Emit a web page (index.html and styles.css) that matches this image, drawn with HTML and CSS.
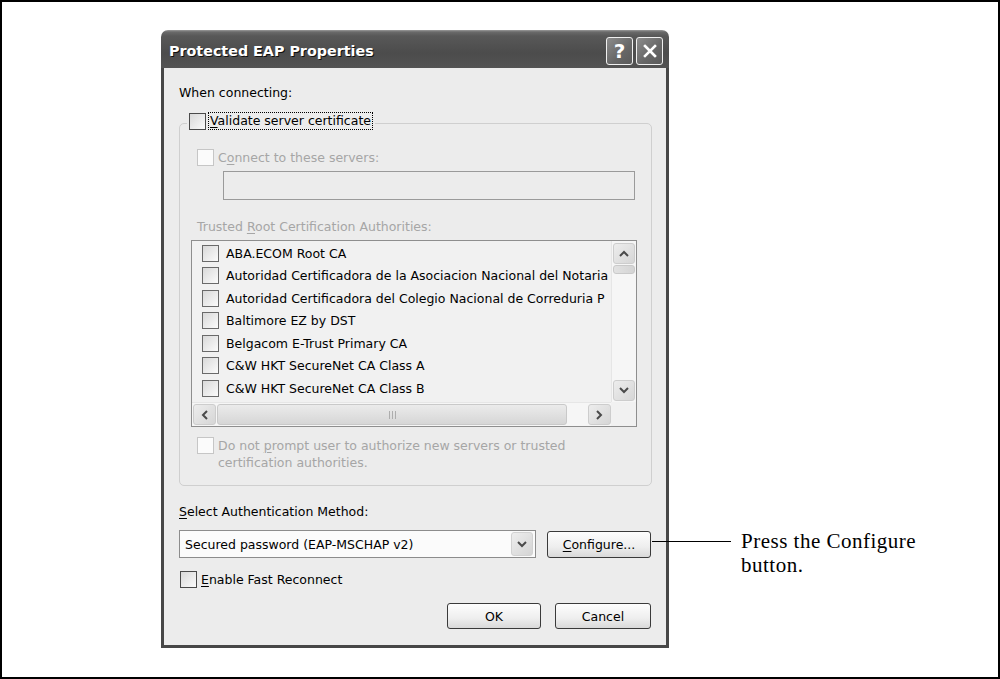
FILE: index.html
```html
<!DOCTYPE html>
<html lang="en">
<head>
  <meta charset="UTF-8">
  <title>Protected EAP Properties</title>
  <link rel="stylesheet" href="styles.css">
</head>
<body>

  <div class="page">
    <div class="dialog">
      <div class="titlebar">
        <span class="title">Protected EAP Properties</span>
        <div class="caption-btns">
          <span class="cap-btn">?</span>
          <span class="cap-btn">
            <svg width="16" height="16" viewBox="0 0 16 16"><path d="M3 3 L13 13 M13 3 L3 13" stroke="#fff" stroke-width="2.6" stroke-linecap="square"/></svg>
          </span>
        </div>
      </div>

      <div class="body">
        <p class="label">When connecting:</p>

        <!-- group box -->
        <div class="group">
          <div class="legend">
            <span class="cb"></span>
            <span class="focus"><u>V</u>alidate server certificate</span>
          </div>

          <div class="row disabled indent connect">
            <span class="cb"></span>C<u>o</u>nnect to these servers:
          </div>
          <div class="textbox"></div>

          <p class="label disabled indent trusted">Trusted <u>R</u>oot Certification Authorities:</p>

          <div class="list">
            <div class="items">
              <div class="item"><span class="cb"></span>ABA.ECOM Root CA</div>
              <div class="item"><span class="cb"></span>Autoridad Certificadora de la Asociacion Nacional del Notaria</div>
              <div class="item"><span class="cb"></span>Autoridad Certificadora del Colegio Nacional de Correduria P</div>
              <div class="item"><span class="cb"></span>Baltimore EZ by DST</div>
              <div class="item"><span class="cb"></span>Belgacom E-Trust Primary CA</div>
              <div class="item"><span class="cb"></span>C&amp;W HKT SecureNet CA Class A</div>
              <div class="item"><span class="cb"></span>C&amp;W HKT SecureNet CA Class B</div>
            </div>
            <div class="vscroll">
              <span class="sbtn">
                <svg width="10" height="7" viewBox="0 0 10 7"><path d="M1 6 L5 2 L9 6" fill="none" stroke="#4a4a4a" stroke-width="2"/></svg>
              </span>
              <span class="vthumb"></span>
              <span class="track"></span>
              <span class="sbtn">
                <svg width="10" height="7" viewBox="0 0 10 7"><path d="M1 1 L5 5 L9 1" fill="none" stroke="#4a4a4a" stroke-width="2"/></svg>
              </span>
            </div>
            <div class="hscroll">
              <span class="sbtn">
                <svg width="7" height="10" viewBox="0 0 7 10"><path d="M6 1 L2 5 L6 9" fill="none" stroke="#4a4a4a" stroke-width="2"/></svg>
              </span>
              <span class="hthumb"></span>
              <span class="track"></span>
              <span class="sbtn">
                <svg width="7" height="10" viewBox="0 0 7 10"><path d="M1 1 L5 5 L1 9" fill="none" stroke="#4a4a4a" stroke-width="2"/></svg>
              </span>
            </div>
            <div class="corner"></div>
          </div>

          <div class="row disabled indent prompt">
            <span class="cb"></span>
            <span>Do not <u>p</u>rompt user to authorize new servers or trusted<br>certification authorities.</span>
          </div>
        </div>

        <p class="label method-label"><u>S</u>elect Authentication Method:</p>
        <div class="method-row">
          <div class="combo">
            <span>Secured password (EAP-MSCHAP v2)</span>
            <span class="drop">
              <svg width="10" height="7" viewBox="0 0 10 7"><path d="M1 1 L5 5 L9 1" fill="none" stroke="#4a4a4a" stroke-width="2"/></svg>
            </span>
          </div>
          <button class="btn configure"><u>C</u>onfigure...</button>
        </div>

        <div class="row fast">
          <span class="cb"></span><u>E</u>nable Fast Reconnect
        </div>

        <div class="actions">
          <button class="btn ok">OK</button>
          <button class="btn cancel">Cancel</button>
        </div>
      </div>
    </div>

    <!-- callout -->
    <div class="note">
      <span class="leader"></span>
      <p>Press the Configure<br>button.</p>
    </div>
  </div>

</body>
</html>
```

FILE: styles.css
```css
* {
  margin: 0;
  padding: 0;
  box-sizing: border-box;
}

body {
  background: #fff;
  font-family: 'DejaVu Sans', sans-serif;
  font-size: 12.5px;
  color: #000;
}

u {
  text-decoration: underline;
  text-underline-offset: 2px;
}

.page {
  width: 1000px;
  height: 679px;
  border: 2px solid #000;
  display: flex;
  align-items: flex-start;
  padding: 28px 0 0 159px;
}

/* dialog window */
.dialog {
  width: 508px;
  flex-shrink: 0;
}

.titlebar {
  height: 38px;
  display: flex;
  justify-content: space-between;
  align-items: center;
  padding: 4px 6px 0 8px;
  border-radius: 7px 7px 0 0;
  background: linear-gradient(#9a9a9a 0, #6a6a6a 2px, #585858 6px, #4c4c4c 60%, #535353 100%);
}

.title {
  color: #fff;
  font-weight: bold;
  font-size: 14.3px;
  text-shadow: 1px 1px 0 #111;
}

.caption-btns {
  display: flex;
  gap: 3px;
}

.cap-btn {
  width: 27px;
  height: 28px;
  display: flex;
  align-items: center;
  justify-content: center;
  border: 1px solid #f0f0f0;
  border-radius: 3px;
  background: linear-gradient(135deg, #8c8c8c, #666 60%, #5a5a5a);
  color: #fff;
  font-weight: bold;
  font-size: 20px;
}

.body {
  background: #ececec;
  border: 3px solid #474747;
  border-top: none;
  padding: 17px 14px 16px 15px;
}

.label {
  line-height: 16px;
}

.disabled {
  color: #a6a6a6;
}

.cb {
  width: 17px;
  height: 17px;
  flex-shrink: 0;
  border: 1px solid #4a4a4a;
  background: linear-gradient(135deg, #d9d9d9, #fbfbfb);
  margin-right: 4px;
}

.disabled .cb {
  border-color: #c6c6c6;
  background: #fbfbfb;
}

.row {
  display: flex;
  align-items: center;
  height: 18px;
}

/* group box */
.group {
  margin-top: 22px;
  border: 1px solid #cfcfcf;
  border-radius: 5px;
  padding: 0 14px 14px 11px;
}

.legend {
  display: flex;
  align-items: center;
  width: fit-content;
  height: 18px;
  margin: -12px 0 0 -4px;
  padding: 0 2px;
  background: #ececec;
}

.legend .cb {
  margin-right: 2px;
}

.focus {
  border: 1px dotted #000;
  padding: 0 1px;
  line-height: 16px;
}

.indent {
  margin-left: 6px;
}

.connect {
  margin-top: 18px;
}

.textbox {
  height: 29px;
  margin: 5px 2px 0 32px;
  border: 1px solid #9a9a9a;
  background: #ececec;
}

.trusted {
  margin-top: 19px;
}

/* certificate list */
.list {
  margin-top: 5px;
  height: 187px;
  border: 1px solid #8e8e8e;
  background: #f1f1f1;
  display: grid;
  grid-template-columns: 1fr 25px;
  grid-template-rows: 1fr 24px;
}

.items {
  overflow: hidden;
  padding-top: 1px;
}

.item {
  display: flex;
  align-items: center;
  height: 22.5px;
  padding-left: 10px;
  white-space: nowrap;
}

.item .cb {
  border-color: #6a6a6a;
  margin-right: 7px;
}

.vscroll {
  display: flex;
  flex-direction: column;
  background: #f6f6f6;
  padding: 1px;
  border-left: 1px solid #e6e6e6;
}

.hscroll {
  display: flex;
  align-items: stretch;
  background: #f6f6f6;
  padding: 1px 0 1px 1px;
  border-top: 1px solid #e6e6e6;
}

.sbtn {
  display: flex;
  align-items: center;
  justify-content: center;
  border: 1px solid #cdcdcd;
  border-radius: 3px;
  background: linear-gradient(135deg, #ededed, #d6d6d6);
}

.vscroll .sbtn {
  height: 21px;
}

.vscroll .sbtn:first-child {
  margin-top: 1px;
}

.hscroll .sbtn {
  width: 23px;
}

.vthumb {
  height: 9px;
  margin-top: 1px;
  border: 1px solid #c9c9c9;
  border-radius: 3px;
  background: linear-gradient(90deg, #e2e2e2, #d4d4d4);
}

.hthumb {
  width: 350px;
  margin-left: 1px;
  border: 1px solid #c9c9c9;
  border-radius: 3px;
  background: linear-gradient(#ebebeb, #d6d6d6);
  display: flex;
  align-items: center;
  justify-content: center;
}

.hthumb::after {
  content: "";
  width: 7px;
  height: 8px;
  background: repeating-linear-gradient(90deg, #adadad 0 1px, transparent 1px 3px);
}

.track {
  flex: 1;
}

.corner {
  background: #f1f1f1;
}

.prompt {
  height: auto;
  align-items: flex-start;
  margin-top: 10px;
  line-height: 17px;
}

/* authentication method */
.method-label {
  margin-top: 18px;
}

.method-row {
  display: flex;
  align-items: center;
  margin-top: 10px;
}

.combo {
  width: 357px;
  height: 28px;
  display: flex;
  align-items: center;
  justify-content: space-between;
  border: 1px solid #8c8c8c;
  background: #fbfbfb;
  padding: 1px 2px 1px 5px;
}

.drop {
  width: 22px;
  height: 24px;
  display: flex;
  align-items: center;
  justify-content: center;
  border: 1px solid #d2d2d2;
  border-radius: 3px;
  background: linear-gradient(135deg, #eeeeee, #d4d4d4);
}

.btn {
  height: 27px;
  font-family: 'DejaVu Sans', sans-serif;
  font-size: 12.5px;
  color: #000;
  border: 1px solid #3a3a3a;
  border-radius: 3px;
  background: linear-gradient(#fdfdfd, #eeeeee 60%, #d9d9d9);
}

.configure {
  width: 104px;
  margin-left: 11px;
}

.fast {
  margin-top: 12px;
}

.fast .cb {
  margin-left: 1px;
}

.actions {
  display: flex;
  justify-content: flex-end;
  gap: 14px;
  margin-top: 15px;
  padding-right: 1px;
}

.ok {
  width: 94px;
  height: 26px;
}

.cancel {
  width: 96px;
  height: 26px;
}

/* callout */
.note {
  display: flex;
  align-items: flex-start;
  margin: 499px 0 0 -17px;
}

.leader {
  width: 79px;
  height: 1px;
  margin: 12px 10px 0 0;
  background: #000;
}

.note p {
  font-family: 'Liberation Serif', serif;
  font-size: 21px;
  letter-spacing: 0.5px;
  line-height: 24px;
}
```
